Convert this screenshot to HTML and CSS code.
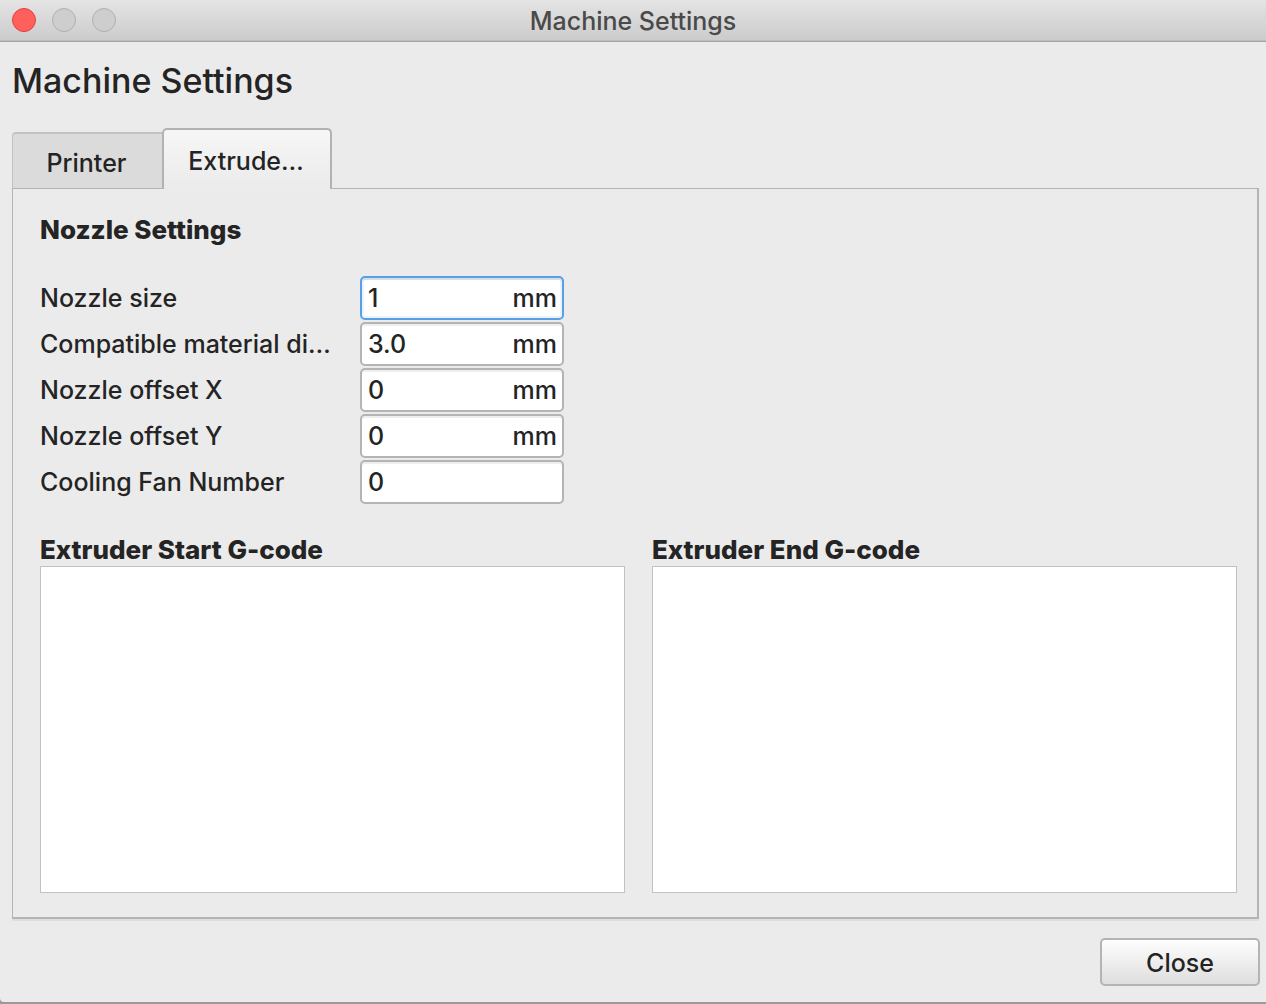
FILE: index.html
```html
<!DOCTYPE html>
<html lang="en">
<head>
<meta charset="utf-8">
<meta name="viewport" content="width=device-width, initial-scale=1">
<title>Machine Settings</title>
<link rel="stylesheet" href="styles.css">
</head>
<body>
<div class="window">
  <header class="titlebar">
    <div class="lights">
      <button class="light light-close" type="button" aria-label="Close window"></button>
      <button class="light" type="button" aria-label="Minimize" disabled></button>
      <button class="light" type="button" aria-label="Zoom" disabled></button>
    </div>
    <div class="titlebar-text">Machine Settings</div>
  </header>
  <main class="content">
    <h1 class="heading">Machine Settings</h1>
    <div class="tabs" role="tablist">
      <button class="tab" type="button" role="tab" aria-selected="false">Printer</button>
      <button class="tab tab-active" type="button" role="tab" aria-selected="true">Extrude…</button>
    </div>
    <section class="panel" role="tabpanel">
      <h2 class="subheading">Nozzle Settings</h2>
      <div class="fields">
        <label class="label" for="size">Nozzle size</label>
        <div class="field field-active"><input class="input" id="size" type="text" value="1"><span class="unit">mm</span></div>
        <label class="label" for="diameter">Compatible material di…</label>
        <div class="field"><input class="input" id="diameter" type="text" value="3.0"><span class="unit">mm</span></div>
        <label class="label" for="offset-x">Nozzle offset X</label>
        <div class="field"><input class="input" id="offset-x" type="text" value="0"><span class="unit">mm</span></div>
        <label class="label" for="offset-y">Nozzle offset Y</label>
        <div class="field"><input class="input" id="offset-y" type="text" value="0"><span class="unit">mm</span></div>
        <label class="label" for="fan">Cooling Fan Number</label>
        <div class="field"><input class="input" id="fan" type="text" value="0"></div>
      </div>
      <div class="codes">
        <div class="code">
          <label class="subheading" for="start">Extruder Start G-code</label>
          <textarea class="editor" id="start"></textarea>
        </div>
        <div class="code">
          <label class="subheading" for="end">Extruder End G-code</label>
          <textarea class="editor" id="end"></textarea>
        </div>
      </div>
    </section>
    <footer class="footer">
      <button class="close" type="button">Close</button>
    </footer>
  </main>
</div>
</body>
</html>
```
FILE: styles.css
```css
* {
  box-sizing: border-box;
}

body {
  margin: 0;
  background: #9a9a9a;
  color: #242424;
  font: 500 25px/32px Inter, "Liberation Sans", sans-serif;
}

button,
input,
textarea {
  font: inherit;
  color: inherit;
}

.window {
  display: flex;
  flex-direction: column;
  min-height: calc(100vh - 2px);
  margin-bottom: 2px;
  background: #ebebeb;
  border-bottom-left-radius: 4px;
}

/* Title bar */
.titlebar {
  display: grid;
  grid-template-columns: 1fr auto 1fr;
  align-items: center;
  height: 42px;
  padding: 0 12px;
  background: linear-gradient(#e4e4e4, #cbcbcb);
  border-bottom: 1px solid #a3a3a3;
  box-shadow: inset 0 -1px #bebebe;
}

.lights {
  display: flex;
  gap: 16px;
  padding-bottom: 1px;
}

.light {
  width: 24px;
  height: 24px;
  padding: 0;
  border: 1px solid #b0b0b0;
  border-radius: 50%;
  background: #cecece;
}

.light-close {
  border-color: #e2413e;
  background: #ff605c;
}

.titlebar-text {
  color: #4a4a4a;
}

/* Content */
.content {
  display: flex;
  flex: 1;
  flex-direction: column;
  padding: 17px 6px 16px 12px;
}

.heading {
  margin: 0 0 25px;
  font-size: 34px;
  font-weight: 500;
  line-height: 44px;
}

.tabs {
  display: flex;
  align-items: flex-end;
  height: 60px;
}

.tab {
  width: 150px;
  height: 56px;
  padding: 4px 2px 0 0;
  border: 1px solid #c2c2c2;
  border-width: 2px 0 0 1px;
  border-radius: 4px 0 0 0;
  background: #dbdbdb;
}

/* The selected tab runs over the panel's top border. */
.tab-active {
  z-index: 1;
  width: 170px;
  height: 61px;
  margin-bottom: -1px;
  padding: 2px 2px 0 0;
  border: 2px solid #b2b2b2;
  border-bottom: 0;
  border-radius: 5px 5px 0 0;
  background: linear-gradient(#f6f6f6, #ebebeb);
}

.panel {
  display: flex;
  flex: 1;
  flex-direction: column;
  margin-right: 1px;
  padding: 25px 20px 24px 27px;
  border: 1px solid #b4b4b4;
  border-width: 1px 2px 2px 1px;
  box-shadow: 0 2px #dedede;
}

.subheading {
  margin: 0;
  font-size: 26px;
  font-weight: 800;
  line-height: 32px;
}

.fields {
  display: grid;
  grid-template-columns: 320px 204px;
  row-gap: 2px;
  align-items: center;
  margin: 30px 0;
}

.label {
  white-space: nowrap;
}

.field {
  display: flex;
  align-items: center;
  height: 44px;
  padding: 0 5px 0 6px;
  border: 2px solid #b4b4b4;
  border-radius: 5px;
  background: #fff;
  box-shadow: inset 0 2px #eee;
}

.field-active {
  border-color: #5a9ee6;
  box-shadow: inset 0 2px #d4dee9, inset 0 0 0 2px #edf3fa;
}

.input {
  flex: 1;
  min-width: 0;
  padding: 0;
  border: 0;
  outline: 0;
  background: none;
}

.codes {
  display: grid;
  flex: 1;
  grid-template-columns: 1fr 1fr;
  column-gap: 27px;
}

.code {
  display: flex;
  flex-direction: column;
}

.editor {
  flex: 1;
  min-height: 120px;
  padding: 6px;
  border: 1px solid #c2c2c2;
  outline: 0;
  background: #fff;
  resize: none;
}

.footer {
  display: flex;
  justify-content: flex-end;
  margin-top: 19px;
}

.close {
  width: 160px;
  height: 48px;
  padding: 2px 0 0;
  border: 2px solid #b4b4b4;
  border-radius: 5px;
  background: linear-gradient(#fefefe, #dedede);
}
```
